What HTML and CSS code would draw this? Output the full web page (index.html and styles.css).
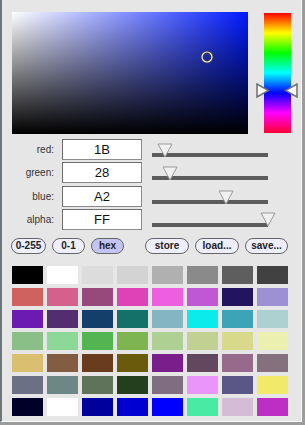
FILE: index.html
```html
<!DOCTYPE html>
<html lang="en">
<head>
    <meta charset="UTF-8">
    <title>Color picker</title>
    <link rel="stylesheet" href="styles.css">
</head>
<body>
<div class="picker">
    <div class="top">
        <div class="sv">
            <svg class="sv-marker" width="14" height="14" viewBox="0 0 14 14">
                <circle cx="7" cy="7" r="5" fill="none" stroke="#3a3a3a" stroke-width="3"/>
                <circle cx="7" cy="7" r="5" fill="none" stroke="#f2f2f2" stroke-width="1.2"/>
            </svg>
        </div>
        <div class="hue-wrap">
            <div class="hue"></div>
            <svg class="hue-arrows" width="43" height="15" viewBox="0 0 43 15">
                <polygon points="1,1 1,14 12.5,7.5" fill="#fafafa" stroke="#6f6f6f" stroke-width="1.5"/>
                <polygon points="41,1 41,14 29.5,7.5" fill="#fafafa" stroke="#6f6f6f" stroke-width="1.5"/>
            </svg>
        </div>
    </div>

    <div class="channels">
        <div class="channel">
            <label>red:</label>
            <input class="val" type="text" value="1B">
            <div class="slider">
                <div class="track"></div>
                <svg class="thumb" style="left:4.8px" width="16" height="15" viewBox="0 0 16 15"><polygon points="1,1 15,1 8,14" fill="#f0f0f0" stroke="#9a9a9a" stroke-width="1"/></svg>
            </div>
        </div>
        <div class="channel">
            <label>green:</label>
            <input class="val" type="text" value="28">
            <div class="slider">
                <div class="track"></div>
                <svg class="thumb" style="left:10.2px" width="16" height="15" viewBox="0 0 16 15"><polygon points="1,1 15,1 8,14" fill="#f0f0f0" stroke="#9a9a9a" stroke-width="1"/></svg>
            </div>
        </div>
        <div class="channel">
            <label>blue:</label>
            <input class="val" type="text" value="A2">
            <div class="slider">
                <div class="track"></div>
                <svg class="thumb" style="left:65.7px" width="16" height="15" viewBox="0 0 16 15"><polygon points="1,1 15,1 8,14" fill="#f0f0f0" stroke="#9a9a9a" stroke-width="1"/></svg>
            </div>
        </div>
        <div class="channel">
            <label>alpha:</label>
            <input class="val" type="text" value="FF">
            <div class="slider">
                <div class="track"></div>
                <svg class="thumb thumb-alpha" style="left:108px" width="16" height="15" viewBox="0 0 16 15"><polygon points="1,1 15,1 8,14" fill="#f0f0f0" stroke="#9a9a9a" stroke-width="1"/></svg>
            </div>
        </div>
    </div>

    <div class="buttons">
        <span class="btn w35">0-255</span>
        <span class="btn w33">0-1</span>
        <span class="btn w33 on">hex</span>
        <span class="btn w44 sep">store</span>
        <span class="btn w44">load...</span>
        <span class="btn w43">save...</span>
    </div>

    <div class="swatches">
        <div style="background:#000000"></div>
        <div style="background:#ffffff"></div>
        <div style="background:#dcdcdc"></div>
        <div style="background:#d3d3d3"></div>
        <div style="background:#b0b0b0"></div>
        <div style="background:#8a8a8a"></div>
        <div style="background:#5e5e5e"></div>
        <div style="background:#414141"></div>

        <div style="background:#cf625f"></div>
        <div style="background:#d4608c"></div>
        <div style="background:#97497c"></div>
        <div style="background:#dd42b6"></div>
        <div style="background:#ee5fe0"></div>
        <div style="background:#c058d5"></div>
        <div style="background:#23145f"></div>
        <div style="background:#9d91d4"></div>

        <div style="background:#6b1ab2"></div>
        <div style="background:#522d70"></div>
        <div style="background:#143f6b"></div>
        <div style="background:#13706b"></div>
        <div style="background:#83b6c2"></div>
        <div style="background:#0cebeb"></div>
        <div style="background:#3da4b7"></div>
        <div style="background:#add1d1"></div>

        <div style="background:#8bbf88"></div>
        <div style="background:#8cd997"></div>
        <div style="background:#53b552"></div>
        <div style="background:#7fb551"></div>
        <div style="background:#afd093"></div>
        <div style="background:#c3d093"></div>
        <div style="background:#d8d98b"></div>
        <div style="background:#ebefaf"></div>

        <div style="background:#d9bf6f"></div>
        <div style="background:#825d42"></div>
        <div style="background:#6a3c1e"></div>
        <div style="background:#6a5a0b"></div>
        <div style="background:#7a1e8b"></div>
        <div style="background:#63475f"></div>
        <div style="background:#976a8b"></div>
        <div style="background:#85717d"></div>

        <div style="background:#6b7085"></div>
        <div style="background:#6c8785"></div>
        <div style="background:#5e7359"></div>
        <div style="background:#233f1e"></div>
        <div style="background:#816d81"></div>
        <div style="background:#ea95f9"></div>
        <div style="background:#5b5784"></div>
        <div style="background:#f1e96a"></div>

        <div style="background:#000028"></div>
        <div style="background:#ffffff"></div>
        <div style="background:#00009c"></div>
        <div style="background:#0000d1"></div>
        <div style="background:#0000ff"></div>
        <div style="background:#49eba4"></div>
        <div style="background:#d4bbd6"></div>
        <div style="background:#bc2ec4"></div>
    </div>
</div>
</body>
</html>
```

FILE: styles.css
```css
* {
    margin: 0;
    padding: 0;
    box-sizing: border-box;
}

body {
    background: #9c9c9c;
    font-family: "Liberation Sans", Arial, sans-serif;
}

.picker {
    width: 302px;
    height: 422px;
    padding: 12px 0 0 10px;
    background: #e6e6e6;
    border-left: 2px solid #6d767b;
    border-right: 1px solid #fafafa;
    border-bottom: 1px solid #fafafa;
}

/* saturation / value square + hue bar */
.top {
    display: flex;
}

.sv {
    position: relative;
    width: 236px;
    height: 122px;
    background: linear-gradient(to top, #000, rgba(0, 0, 0, 0)),
                linear-gradient(to right, #fff, #001aff);
}

.sv-marker {
    position: absolute;
    left: 188px;
    top: 38px;
}

.hue-wrap {
    position: relative;
    width: 43px;
    height: 122px;
    margin-left: 9px;
}

.hue {
    width: 27px;
    height: 120px;
    margin: 1px 0 0 7px;
    background: linear-gradient(to bottom, #f00, #ff0, #0f0, #0ff, #00f, #f0f, #f03);
}

.hue-arrows {
    position: absolute;
    left: -1px;
    top: 71px;
}

/* channel rows */
.channels {
    display: flex;
    flex-direction: column;
    gap: 2.33px;
    margin-top: 5px;
}

.channel {
    display: flex;
    align-items: center;
    height: 21px;
}

.channel label {
    width: 42px;
    margin-right: 8px;
    text-align: right;
    font-size: 10px;
    color: #333;
}

.val {
    width: 80px;
    height: 21px;
    margin-right: 10px;
    border: 1px solid #8a8a8a;
    border-top-color: #6e6e6e;
    border-left-color: #6e6e6e;
    background: #fff;
    text-align: center;
    font-family: "Liberation Sans", Arial, sans-serif;
    font-size: 13px;
    color: #111;
    outline: none;
}

.slider {
    position: relative;
    width: 116px;
    height: 21px;
}

.track {
    height: 4px;
    margin-top: 14px;
    background: #5c5c5c;
}

.thumb {
    position: absolute;
    top: 4px;
}

.thumb-alpha {
    top: 3px;
}

/* buttons */
.buttons {
    display: flex;
    gap: 6px;
    margin: 8px 0 0 -1px;
}

.btn {
    display: flex;
    align-items: center;
    justify-content: center;
    height: 16px;
    border: 1.5px solid #666;
    border-radius: 8px;
    background: #eeeefc;
    font-size: 10px;
    font-weight: bold;
    color: #222;
}

.btn.on {
    background: #c4c4f4;
}

.btn.sep {
    margin-left: 15px;
}

.w35 { width: 35px; }
.w33 { width: 33px; }
.w44 { width: 44px; }
.w43 { width: 43px; }

/* swatches */
.swatches {
    display: grid;
    grid-template-columns: repeat(8, 31px);
    grid-auto-rows: 18px;
    gap: 4px;
    margin-top: 12px;
}
```
